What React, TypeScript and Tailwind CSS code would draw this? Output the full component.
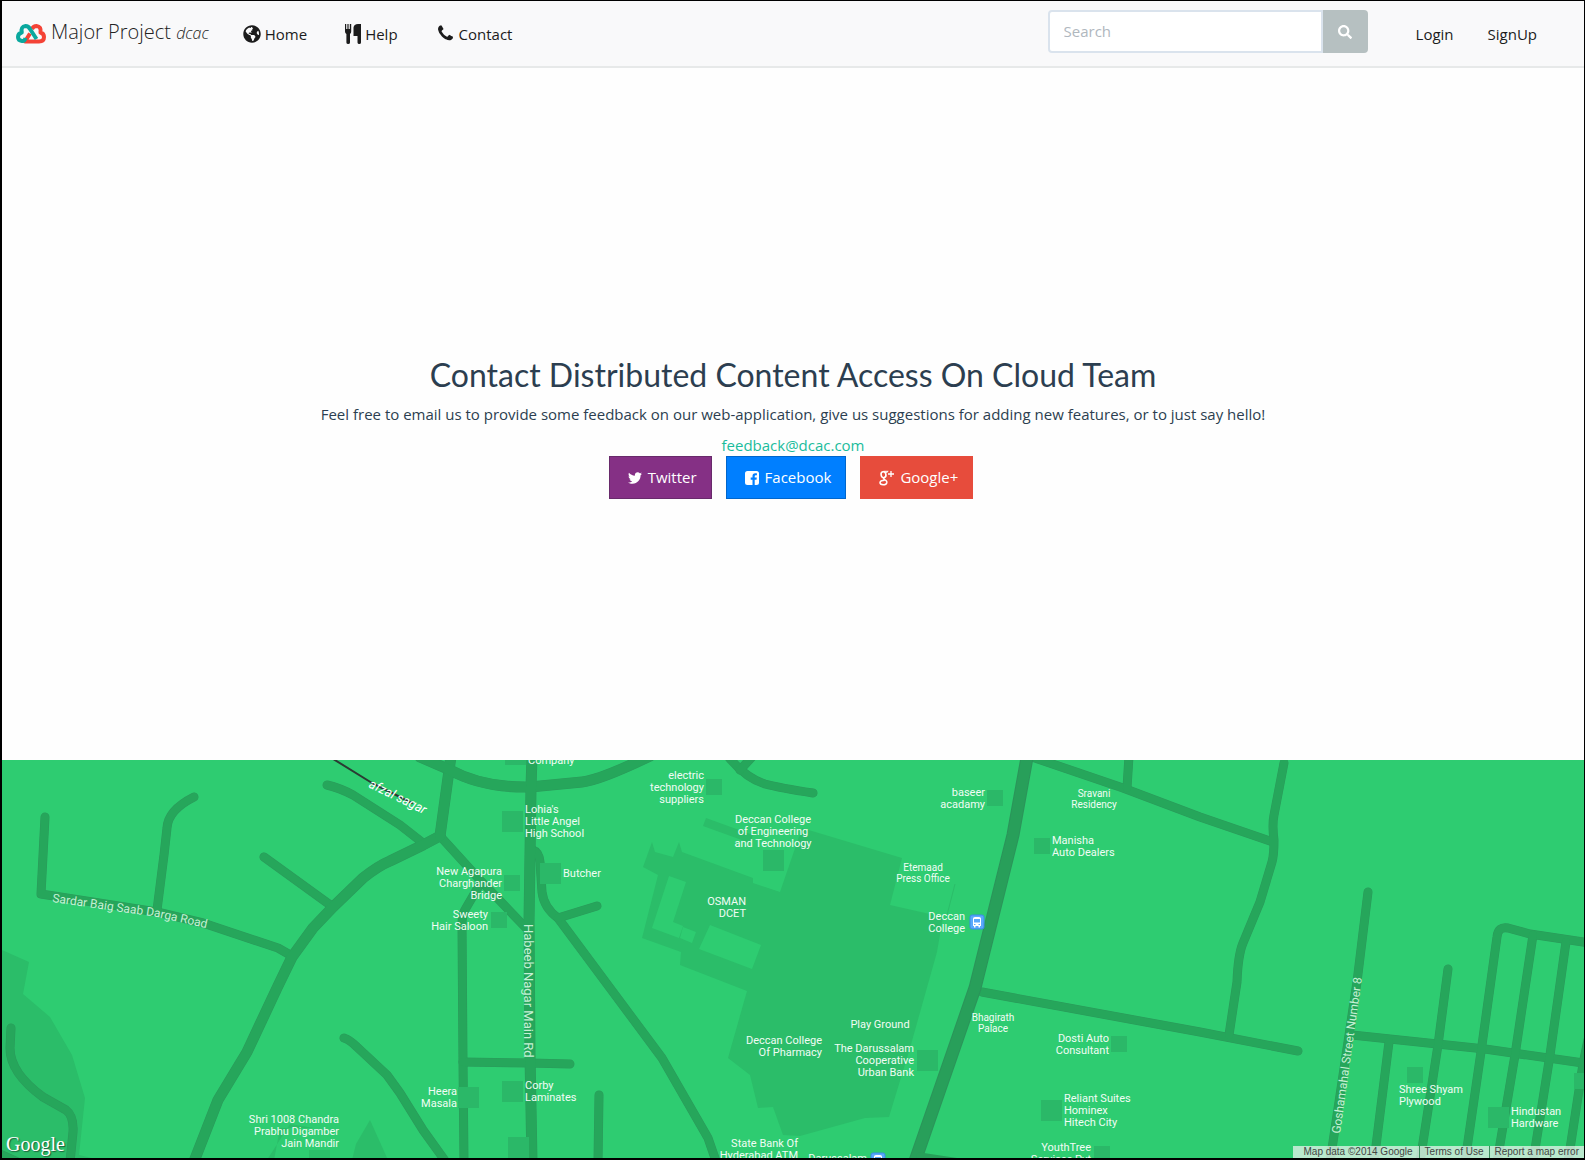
import React from "react";
import { FaGlobeAmericas, FaSearch, FaTwitter } from "react-icons/fa";

type Label = { x: number; y: number; anchor: "start" | "middle" | "end"; lines: string[]; small?: boolean };

const labels: Label[] = [
  { x: 528, y: 764, anchor: "start", lines: ["Company"] },
  { x: 525, y: 813, anchor: "start", lines: ["Lohia's", "Little Angel", "High School"] },
  { x: 704, y: 779, anchor: "end", lines: ["electric", "technology", "suppliers"] },
  { x: 773, y: 823, anchor: "middle", lines: ["Deccan College", "of Engineering", "and Technology"] },
  { x: 502, y: 875, anchor: "end", lines: ["New Agapura", "Charghander", "Bridge"] },
  { x: 563, y: 877, anchor: "start", lines: ["Butcher"] },
  { x: 488, y: 918, anchor: "end", lines: ["Sweety", "Hair Saloon"] },
  { x: 746, y: 905, anchor: "end", lines: ["OSMAN", "DCET"] },
  { x: 985, y: 796, anchor: "end", lines: ["baseer", "acadamy"] },
  { x: 1094, y: 797, anchor: "middle", lines: ["Sravani", "Residency"], small: true },
  { x: 1052, y: 844, anchor: "start", lines: ["Manisha", "Auto Dealers"] },
  { x: 923, y: 871, anchor: "middle", lines: ["Etemaad", "Press Office"], small: true },
  { x: 965, y: 920, anchor: "end", lines: ["Deccan", "College"] },
  { x: 880, y: 1028, anchor: "middle", lines: ["Play Ground"] },
  { x: 822, y: 1044, anchor: "end", lines: ["Deccan College", "Of Pharmacy"] },
  { x: 914, y: 1052, anchor: "end", lines: ["The Darussalam", "Cooperative", "Urban Bank"] },
  { x: 993, y: 1021, anchor: "middle", lines: ["Bhagirath", "Palace"], small: true },
  { x: 1109, y: 1042, anchor: "end", lines: ["Dosti Auto", "Consultant"] },
  { x: 1064, y: 1102, anchor: "start", lines: ["Reliant Suites", "Hominex", "Hitech City"] },
  { x: 1091, y: 1151, anchor: "end", lines: ["YouthTree", "Services Pvt"] },
  { x: 339, y: 1123, anchor: "end", lines: ["Shri 1008 Chandra", "Prabhu Digamber", "Jain Mandir"] },
  { x: 457, y: 1095, anchor: "end", lines: ["Heera", "Masala"] },
  { x: 525, y: 1089, anchor: "start", lines: ["Corby", "Laminates"] },
  { x: 798, y: 1147, anchor: "end", lines: ["State Bank Of", "Hyderabad ATM"] },
  { x: 867, y: 1162, anchor: "end", lines: ["Darussalam"] },
  { x: 1399, y: 1093, anchor: "start", lines: ["Shree Shyam", "Plywood"] },
  { x: 1511, y: 1115, anchor: "start", lines: ["Hindustan", "Hardware"] },
];

const streets = [
  "M45 817L41 894L157 912L203 923L278 948L292 956",
  "M194 797Q168 810 167 828L164 855L157 910",
  "M264 857L333 907",
  "M327 785Q340 788 353 795L400 825L423 843",
  "M344 1038Q350 1040 357 1047L387 1075L400 1093L423 1130L446 1162",
  "M11 1028L10 1048Q10 1073 43 1097L66 1110Q74 1116 73 1132L70 1162",
  "M0 1154L22 1164",
  "M440 836L480 880L526 928",
  "M480 884L466 908Q462 914 462 924L463 1062L464 1162",
  "M463 1062L530 1063L570 1064",
  "M533 850Q539 852 540 862L542 892Q544 908 558 918L662 1058L708 1138L717 1164",
  "M558 918L597 906",
  "M599 1095L598 1162",
  "M727 755Q745 778 765 784Q780 788 813 793",
  "M752 757L740 770",
  "M1032 757L1123 788L1200 817L1273 842",
  "M1129 756L1127 788",
  "M982 992L1200 1032L1298 1051",
  "M1284 763L1274 815Q1272 825 1274 840Q1274 855 1272 862L1260 902L1243 943Q1238 955 1237 982L1229 1035",
  "M1368 892L1357 982L1330 1162",
  "M1352 1035L1485 1049L1590 1064",
  "M1389 1042L1374 1162",
  "M1448 969L1438 1045L1420 1162",
  "M1590 943L1530 934L1508 928Q1498 926 1497 937L1482 1045L1465 1162",
  "M1533 935L1515 1055L1497 1162",
  "M1566 942L1550 1055L1533 1162",
  "M1588 1040L1583 1064L1568 1162",
];

const avenues = [
  "M193 1164L218 1100L247 1052L277 988L292 957L313 928L333 907L363 878Q378 866 390 861L423 845L440 836",
  "M451 756L440 836",
  "M420 757L450 770Q483 788 530 787L582 782Q600 780 650 756",
  "M532 756L531 788L529 922L530 1055L532 1162",
];

const blocks: [number, number, number][] = [
  [505, 744, 21], [502, 811, 21], [504, 875, 16], [540, 863, 21], [491, 912, 16], [706, 779, 16],
  [763, 850, 21], [458, 1087, 21], [502, 1081, 21], [508, 1137, 21], [987, 790, 16], [1034, 838, 16],
  [917, 1050, 21], [1111, 1036, 16], [1041, 1100, 21], [1094, 1146, 16], [1407, 1067, 16],
  [1488, 1107, 21], [1574, 1073, 16],
];

function BusStop({ x, y }: { x: number; y: number }) {
  return (
    <g transform={`translate(${x} ${y})`}>
      <rect width="14" height="14" rx="2" fill="#5aa9fb" stroke="#3b8be6" />
      <path d="M3 3.500Q3 2 5 2H9Q11 2 11 3.500V11H10V12.500H8.500V11H5.500V12.500H4V11H3Z" fill="#fff" />
      <path d="M4 4H10V7.500H4Z" fill="#5aa9fb" />
      <path d="M4 9h1.500v1H4ZM8.500 9H10v1H8.500Z" fill="#5aa9fb" />
    </g>
  );
}

function CityMap() {
  return (
    <svg
      className="h-full w-full font-[Roboto,sans-serif]"
      viewBox="2 760 1582 398"
      preserveAspectRatio="xMidYMid slice"
      role="img"
      aria-label="Map of the area around Deccan College"
    >
      <g fill="#2bbd69">
        <path d="M0 949L29 962L23 994L50 1017L72 1055L85 1098L79 1155L100 1160H0Z" />
        <path d="M370 1120L388 1160H352L356 1144Z" />
        <path d="M309 1150h21v10h-21Z" />
        <path d="M290 1124L314 1128L280 1128L274 1160H267Z" />
        <path d="M706 818L753 835L750 843L703 826Z" />
        <path
          fillRule="evenodd"
          d="M652 842L655 852L673 857L679 842L682 852L753 878V883L780 892L802 828L902 858L890 905L943 917L937 952L910 1048L889 1117L865 1118L800 1136L783 1135L773 1107L758 1108L750 1075L728 1058L747 991L680 965L681 952L642 938L658 875L643 867ZM669 876L686 882L673 922L683 926L679 938L652 928ZM683 927L696 932L692 943L680 938ZM710 925L761 945L752 969L699 949Z"
        />
      </g>
      <path d="M955 884L947 915" stroke="#2bbd69" fill="none" />
      <g fill="none" strokeLinecap="round" strokeLinejoin="round">
        <g stroke="#2b9a5b">
          {streets.map((d) => <path key={d} d={d} strokeWidth="9" />)}
          {avenues.map((d) => <path key={d} d={d} strokeWidth="11" />)}
        </g>
        <g stroke="#26a65b">
          {streets.map((d) => <path key={d} d={d} strokeWidth="8" />)}
          {avenues.map((d) => <path key={d} d={d} strokeWidth="10" />)}
        </g>
        <path d="M1028 752L1013 835L975 988L914 1164" stroke="#2b945a" strokeWidth="13" />
        <path d="M1028 752L1013 835L975 988L914 1164" stroke="#289f5a" strokeWidth="11" />
        <path d="M920 1156L960 1162" stroke="#289f5a" strokeWidth="7" />
        <path d="M330 757L372 783L412 803" stroke="#2b3a33" strokeWidth="2" />
      </g>
      <g fill="#2bb868">
        {blocks.map(([x, y, s]) => <rect key={`${x}-${y}`} x={x} y={y} width={s} height={s} />)}
      </g>
      <BusStop x={970} y={915} />
      <BusStop x={871} y={1153} />
      <g fill="#f1fcf5">
        {labels.map((l) => (
          <text key={l.lines.join()} textAnchor={l.anchor} fontSize={l.small ? 10 : 11}>
            {l.lines.map((line, i) => (
              <tspan key={line} x={l.x} y={l.y + i * (l.small ? 11 : 12)}>{line}</tspan>
            ))}
          </text>
        ))}
      </g>
      <g fill="#c5f0d5">
        <path id="sardar" d="M52 902L157 917L210 929" fill="none" />
        <text fontSize="12"><textPath href="#sardar">Sardar Baig Saab Darga Road</textPath></text>
        <text fontSize="13" transform="translate(524 924) rotate(90)">Habeeb Nagar Main Rd</text>
        <text fontSize="12" transform="translate(1340 1134) rotate(-82)">Goshamahal Street Number 8</text>
      </g>
      <text fontSize="13" fontStyle="italic" fill="#fff" transform="translate(368 787) rotate(26)">afzal sagar</text>
    </svg>
  );
}

function CloudLogo() {
  return (
    <svg className="h-5 w-[30px]" viewBox="0 0 30 20" fill="none" strokeWidth="4" strokeLinejoin="round" aria-hidden="true">
      <path d="M16 5Q17.500 2 20.500 2Q25.500 2.500 24.500 8.500Q28 9.500 28 13Q28 17.500 23 17.500H9L14 9.500" stroke="#f44336" />
      <path d="M9.500 14Q8.500 17.500 6 17Q2 16.500 2 13Q2 9.500 5.800 8.500Q4.500 2.500 9.500 2Q12.500 2 14 5L20.500 15" stroke="#0aa89e" />
    </svg>
  );
}

function Cutlery() {
  return (
    <svg className="h-5 w-4" viewBox="0 0 16 20" fill="currentColor" aria-hidden="true">
      <path d="M0 0h1.200v5h1.200V0h1.200v5h1.200V0H6.200v7.500Q6.200 9 5 10V18.500Q5 20 3.200 20T1.400 18.500V10Q0 9 0 7.500Z" />
      <path d="M8.500 3.500Q9 0 13 0H16V18.500Q16 20 14.300 20T12.500 18.500V12H8.500Z" />
    </svg>
  );
}

function Phone() {
  return (
    <svg className="size-[19px]" viewBox="0 0 1792 1792" fill="currentColor" aria-hidden="true">
      <path d="M1600 1240q0 27-10 70.500t-21 68.500q-21 50-122 106-94 51-186 51-27 0-53-3.500t-57.500-12.500-47-14.500-55.500-20.500-49-18q-98-35-175-83-127-79-264-216t-216-264q-48-77-83-175-3-9-18-49t-20.500-55.500-14.500-47-12.500-57.500-3.500-53q0-92 51-186 56-101 106-122 25-11 68.500-21t70.500-10q14 0 21 3 18 6 53 76 11 19 30 54t35 63.500 31 53.500q3 4 17.500 25t21.500 35.500 7 28.500q0 20-28.500 50t-62 55-62 53-28.500 46q0 9 5 22.500t8.500 20.500 14 24 11.500 19q76 137 174 235t235 174q2 1 19 11.500t24 14 20.500 8.500 22.500 5q18 0 46-28.500t53-62 55-62 50-28.500q14 0 28.500 7t35.500 21.500 25 17.500q25 15 53.500 31t63.500 35 54 30q70 35 76 53 3 7 3 21z" />
    </svg>
  );
}

function FacebookSquare() {
  return (
    <svg className="size-3.5" viewBox="0 0 14 14" fill="currentColor" aria-hidden="true">
      <path d="M0 2.500Q0 0 2.500 0H11.500Q14 0 14 2.500V11.500Q14 14 11.500 14H9.700V8.700H11.500L11.800 6.600H9.700V5.300Q9.700 4.200 10.800 4.200H11.900V2.300Q11 2.200 10.300 2.200Q7.500 2.300 7.500 5V6.600H5.700V8.700H7.500V14H2.500Q0 14 0 11.500Z" />
    </svg>
  );
}

function GooglePlus() {
  return (
    <svg className="h-4 w-[15px]" viewBox="0 0 15 16" fill="none" stroke="currentColor" aria-hidden="true">
      <ellipse cx="4.500" cy="4.700" rx="2.400" ry="3" strokeWidth="1.600" transform="rotate(-12 4.500 4.700)" />
      <path d="M4.500 1.300H9.200L8 2.300H6.500" strokeWidth="1" />
      <path d="M5 7.800Q4.300 8.800 5.600 9.700Q8.200 11 7.800 12.700Q7.200 14.800 4.200 14.800Q1 14.700 1 12.600Q1.200 10.300 5.600 10.300" strokeWidth="1.500" />
      <path d="M12 1V7M9 4H15" strokeWidth="1.300" />
    </svg>
  );
}

const navLink = "flex items-center gap-1 text-[15px] leading-5 text-[#1c1c1c]";
const social = "flex h-[43px] items-center gap-1.5 border pr-3.5 pl-[18px] text-[15px] text-white";

export default function App() {
  return (
    <div className="flex min-h-screen flex-col border-t border-r border-b-2 border-l-2 border-black bg-[#fefefe] font-['Open_Sans',sans-serif] text-[#2c3e50]">
      <header className="flex h-[67px] items-center border-b-2 border-[#e7e9e9] bg-[#f9f9fa]">
        <a href="#" className="flex items-center gap-[5px] pl-3.5 text-[#222]">
          <CloudLogo />
          <span className="pb-1 text-xl leading-7 font-light whitespace-nowrap">Major Project <em className="text-base">dcac</em></span>
        </a>
        <nav className="ml-[34px] flex items-center gap-[38px]">
          <a href="#" className={navLink}><FaGlobeAmericas className="size-[18px]" />Home</a>
          <a href="#" className={navLink}><Cutlery />Help</a>
          <a href="#" className={navLink}><Phone />Contact</a>
        </nav>
        <form className="mr-12 mb-1 ml-auto flex h-[43px]" onSubmit={(e) => e.preventDefault()}>
          <input
            type="search"
            aria-label="Search"
            placeholder="Search"
            className="w-[275px] rounded-l border-2 border-[#dae3ed] bg-white px-3.5 text-[15px] outline-none placeholder:text-[#b0b7be]"
          />
          <button type="submit" aria-label="Submit search" className="flex w-[45px] items-center justify-center rounded-r bg-[#b6c0c1] text-white">
            <FaSearch className="size-3.5" />
          </button>
        </form>
        <div className="mr-[47px] flex gap-[34px]">
          <a href="#" className={navLink}>Login</a>
          <a href="#" className={navLink}>SignUp</a>
        </div>
      </header>

      <main className="flex flex-1 flex-col items-center px-4 pt-[288px] pb-10 text-center">
        <h1 className="font-[Lato,sans-serif] text-[32px] leading-[38px]">Contact Distributed Content Access On Cloud Team</h1>
        <p className="mt-2 text-[15px] leading-6">
          Feel free to email us to provide some feedback on our web-application, give us suggestions for adding new features, or to just say hello!
        </p>
        <a href="mailto:feedback@dcac.com" className="mt-2 text-[15px] leading-[22px] text-[#1abc9c]">feedback@dcac.com</a>
        <div className="flex gap-3.5 pr-1">
          <a href="#" className={`${social} border-[#682a6b] bg-[#853085]`}><FaTwitter className="size-3.5" />Twitter</a>
          <a href="#" className={`${social} border-[#0066cc] bg-[#007fff]`}><FacebookSquare />Facebook</a>
          <a href="#" className={`${social} border-[#e74c3c] bg-[#e74c3c]`}><GooglePlus />Google+</a>
        </div>
      </main>

      <section className="relative h-[398px] overflow-hidden bg-[#2ecc71]">
        <CityMap />
        <a href="#" className="absolute bottom-0.5 left-1 font-['Liberation_Serif',serif] text-[20px] leading-6 text-white [text-shadow:1px_1px_1px_#1b5e3a]">Google</a>
        <div className="absolute right-0 bottom-0 flex h-3 items-center bg-[#f5f5f5]/70 font-['Liberation_Sans',sans-serif] text-[10px] leading-3 text-[#444]">
          <span className="pr-1.5 pl-2.5">Map data ©2014 Google</span>
          <a href="#" className="border-l border-[#3c8f5e] px-[5px]">Terms of Use</a>
          <a href="#" className="border-l border-[#3c8f5e] px-[5px]">Report a map error</a>
        </div>
      </section>
    </div>
  );
}
